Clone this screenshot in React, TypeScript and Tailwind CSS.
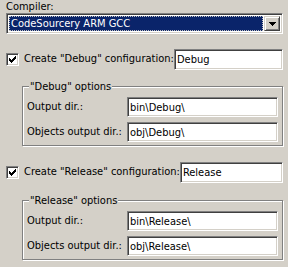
// Project wizard page — compiler picker plus Debug/Release configuration blocks,
// drawn in the classic Windows 2000 look.
const FONT = "font-['DejaVu_Sans_Condensed','DejaVu_Sans',sans-serif] text-[11px] text-black";

// sunken 3D edge used by text boxes, the combo and the checkboxes
const SUNKEN =
  "border border-t-[#808080] border-l-[#808080] border-b-white border-r-white shadow-[inset_1px_1px_0_#404040,inset_-1px_-1px_0_#d4d0c8]";

// classic 7x7 check glyph, one string per pixel row
const CHECK = ["......#", ".....##", "#...###", "##.###.", "#####..", ".###...", "..#...."];

function TextBox({ value, className = "" }: { value: string; className?: string }) {
  return (
    <div className={`${SUNKEN} bg-white h-[20px] pl-[2px] flex items-center leading-none ${className}`}>
      {value}
    </div>
  );
}

function CheckBox() {
  return (
    <div className={`${SUNKEN} bg-white w-[13px] h-[13px] shrink-0 flex items-center justify-center`}>
      <svg width="7" height="7" viewBox="0 0 7 7" shapeRendering="crispEdges">
        {CHECK.flatMap((row, y) =>
          row.split("").map((c, x) =>
            c === "#" ? <rect key={`${x}-${y}`} x={x} y={y} width="1" height="1" fill="#000" /> : null
          )
        )}
      </svg>
    </div>
  );
}

function ConfigRow({ name }: { name: string }) {
  return (
    <div className="flex items-center h-[21px]">
      <CheckBox />
      <span className="ml-[5px] flex-1 whitespace-nowrap">Create "{name}" configuration:</span>
      <TextBox value={name} className="w-[109px] h-[21px]" />
    </div>
  );
}

function Group({ name }: { name: string }) {
  return (
    <div className="relative ml-[16px] border border-[#808080] shadow-[1px_1px_0_#fff,inset_1px_1px_0_#fff] pt-[10px] pb-[3px] pl-[4px] pr-[4px] flex flex-col gap-[5px]">
      {/* legend sits over the etched top edge */}
      <span className="absolute left-[6px] top-[-7px] bg-[#d4d0c8] px-[1px] leading-[13px]">
        "{name}" options
      </span>
      <div className="flex items-center">
        <span className="w-[100px]">Output dir.:</span>
        <TextBox value={`bin\\${name}\\`} className="flex-1" />
      </div>
      <div className="flex items-center">
        <span className="w-[100px] whitespace-nowrap">Objects output dir.:</span>
        <TextBox value={`obj\\${name}\\`} className="flex-1" />
      </div>
    </div>
  );
}

export default function App() {
  return (
    <div className={`${FONT} bg-[#d4d0c8] w-[288px] h-[267px] pl-[6px] pr-[5px] flex flex-col overflow-hidden`}>
      <div className="leading-[13px]">Compiler:</div>

      {/* Compiler combo, closed, with the selected item focused */}
      <div className={`${SUNKEN} bg-white h-[21px] flex p-[2px]`}>
        <div className="flex-1 bg-[#0a246a] text-white border border-dotted border-[#c0c0c0] flex items-center pl-[1px] leading-none">
          CodeSourcery ARM GCC
        </div>
        <div className="w-[16px] ml-[1px] bg-[#d4d0c8] border border-t-[#d4d0c8] border-l-[#d4d0c8] border-b-[#404040] border-r-[#404040] shadow-[inset_1px_1px_0_#fff,inset_-1px_-1px_0_#808080] flex items-center justify-center">
          <svg width="7" height="4" viewBox="0 0 7 4" shapeRendering="crispEdges">
            <path d="M0 0h7v1h-7zM1 1h5v1h-5zM2 2h3v1h-3zM3 3h1v1h-1z" fill="#000" />
          </svg>
        </div>
      </div>

      <div className="mt-[15px]">
        <ConfigRow name="Debug" />
      </div>
      <div className="mt-[16px]">
        <Group name="Debug" />
      </div>

      <div className="mt-[16px]">
        <ConfigRow name="Release" />
      </div>
      <div className="mt-[17px]">
        <Group name="Release" />
      </div>
    </div>
  );
}
